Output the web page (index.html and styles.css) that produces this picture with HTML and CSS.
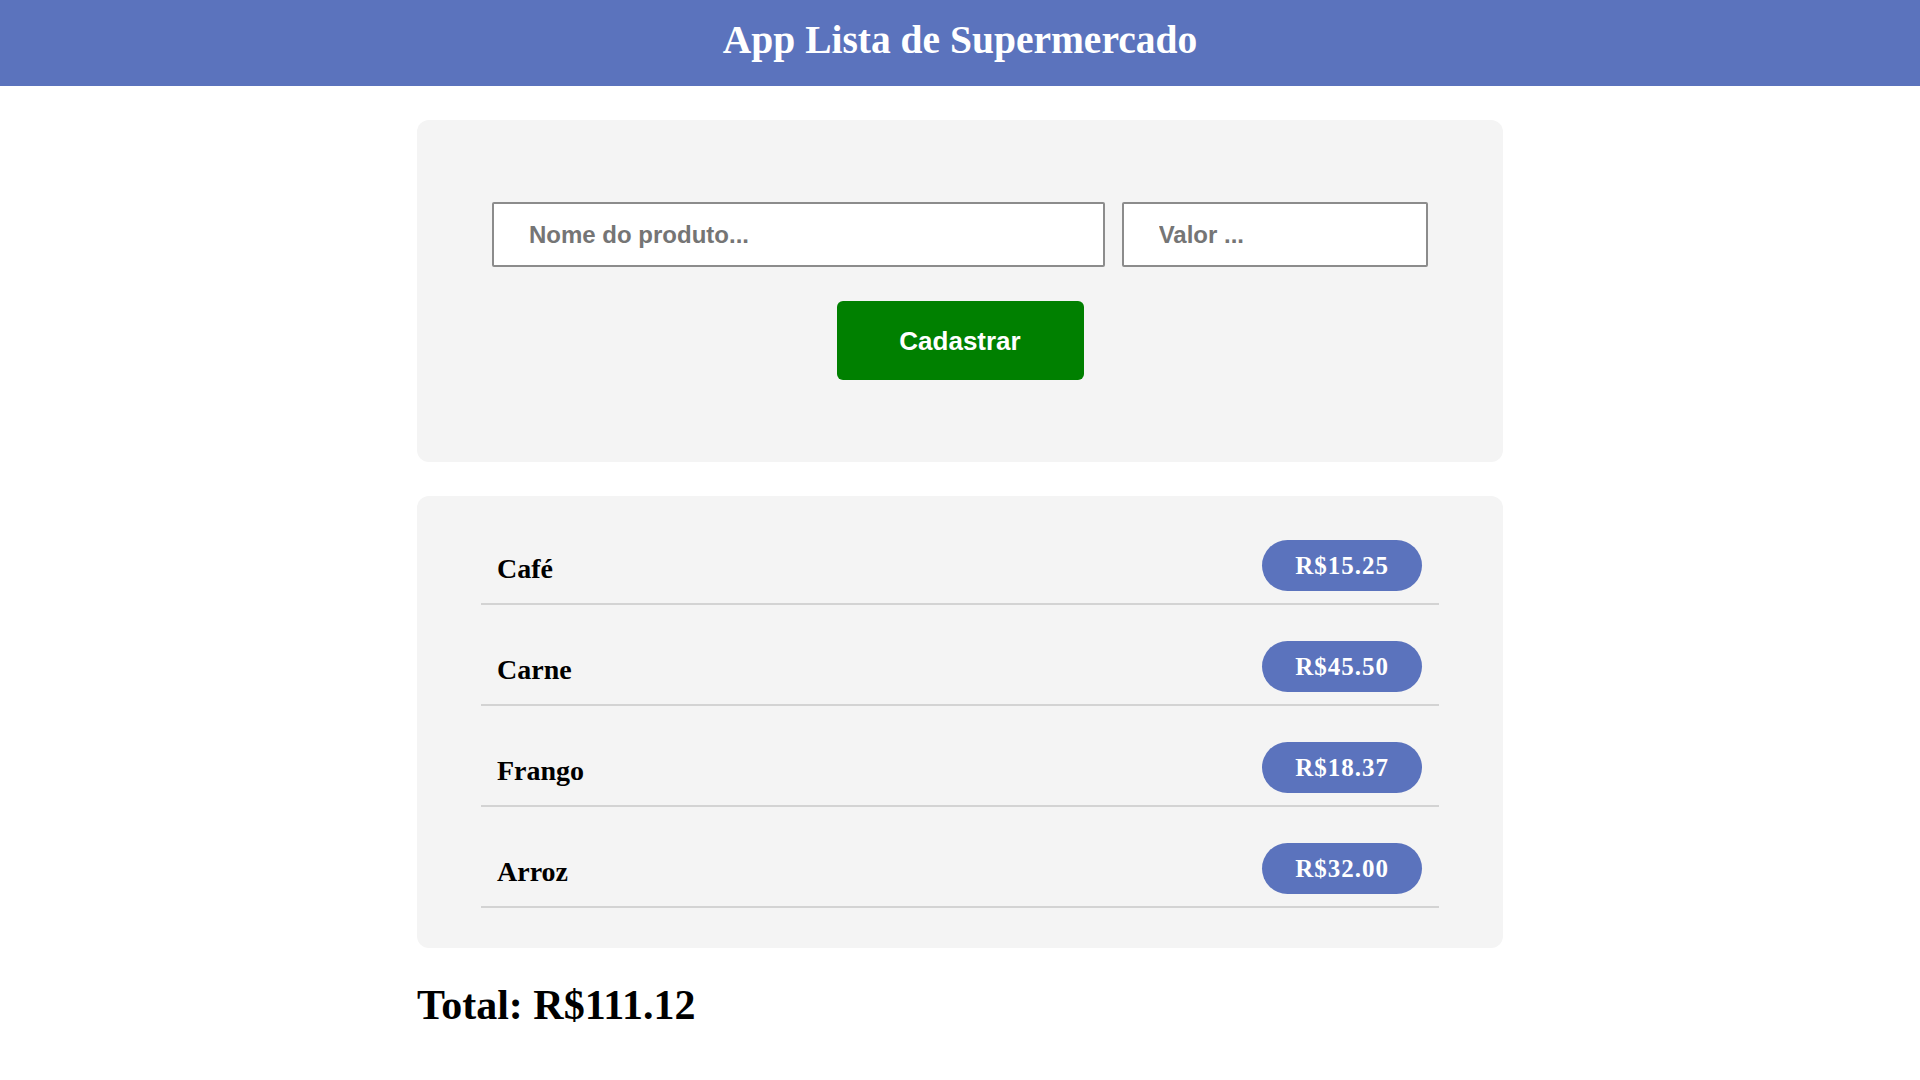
FILE: index.html
```html
<!DOCTYPE html>
<html lang="pt-BR">
<head>
<meta charset="utf-8">
<title>App Lista de Supermercado</title>
<link rel="stylesheet" href="styles.css">
</head>
<body>
<header class="topbar">
  <h1 class="title">App Lista de Supermercado</h1>
</header>
<main class="main">
  <section class="card form-card">
    <div class="inputs">
      <input class="field field-name" type="text" placeholder="Nome do produto...">
      <input class="field field-value" type="text" placeholder="Valor ...">
    </div>
    <button class="btn" type="button">Cadastrar</button>
  </section>
  <section class="card list-card">
    <div class="item"><span class="item-name">Café</span><span class="badge">R$15.25</span></div>
    <div class="item"><span class="item-name">Carne</span><span class="badge">R$45.50</span></div>
    <div class="item"><span class="item-name">Frango</span><span class="badge">R$18.37</span></div>
    <div class="item"><span class="item-name">Arroz</span><span class="badge">R$32.00</span></div>
  </section>
  <h2 class="total">Total: R$111.12</h2>
</main>
</body>
</html>
```
FILE: styles.css
```css
* { box-sizing: border-box; }
html, body { margin: 0; padding: 0; background: #ffffff; }
body { font-family: "Liberation Serif", "Times New Roman", serif; color: #000; }

.topbar {
  background: #5b73bd;
  height: 86px;
  padding-top: 17px;
  text-align: center;
}
.title {
  margin: 0;
  color: #ffffff;
  font-size: 39.5px;
  line-height: 46px;
  font-weight: bold;
}

.main {
  width: 1086px;
  margin: 34px auto 0;
  display: flex;
  flex-direction: column;
  gap: 34px;
}

.card {
  background: #f4f4f4;
  border-radius: 12px;
}

.form-card {
  padding: 82px 75px;
  display: flex;
  flex-direction: column;
  align-items: center;
  gap: 34px;
}
.inputs {
  display: grid;
  grid-template-columns: minmax(0, 2fr) minmax(0, 1fr);
  gap: 17px;
  width: 100%;
}
.field {
  width: 100%;
  height: 65px;
  padding: 0 35px;
  border: 2px solid #8c8c8c;
  border-radius: 2px;
  background: #ffffff;
  font-family: "Liberation Sans", Arial, sans-serif;
  font-size: 24px;
  font-weight: bold;
  color: #333;
}
.field::placeholder { color: #757575; opacity: 1; }

.btn {
  background: #008000;
  color: #ffffff;
  border: none;
  border-radius: 6px;
  padding: 0 62px;
  height: 79px;
  width: 247px;
  font-family: "Liberation Sans", Arial, sans-serif;
  font-size: 26px;
  font-weight: bold;
  line-height: 30px;
}

.list-card {
  padding: 32px 64px 40px;
  display: flex;
  flex-direction: column;
  gap: 24px;
}
.item {
  display: flex;
  justify-content: space-between;
  align-items: center;
  padding: 12px 17px 12px 16px;
  border-bottom: 2px solid #d3d3d3;
}
.item-name {
  font-size: 28px;
  font-weight: bold;
  padding-top: 7px;
}
.badge {
  background: #5b73bd;
  color: #ffffff;
  border-radius: 26px;
  padding: 11px 33px;
  font-size: 25px;
  line-height: 29px;
  font-weight: bold;
  letter-spacing: 1px;
}

.total {
  margin: 0;
  font-size: 42px;
  font-weight: bold;
  line-height: 46px;
}
```
